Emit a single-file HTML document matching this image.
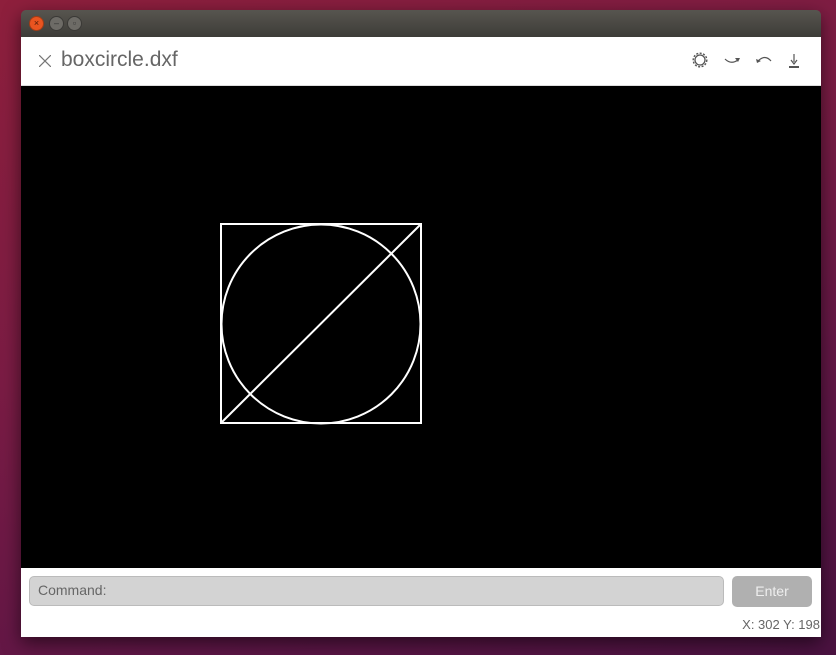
<!DOCTYPE html>
<html><head><style>
html,body{margin:0;padding:0}
body{width:836px;height:655px;overflow:hidden;position:relative;font-family:"Liberation Sans",sans-serif;
background:linear-gradient(160deg,#8e1f3c 0%,#7a1c44 40%,#5e1646 75%,#4a1240 100%);}
.win{position:absolute;left:21px;top:10px;width:800px;height:627px;box-shadow:0 6px 18px rgba(0,0,0,.55);border-radius:5px 5px 0 0;overflow:hidden}
.title{position:absolute;left:0;top:0;width:800px;height:27px;background:linear-gradient(#57554f,#3d3c38)}
.btn{position:absolute;top:6px;width:13px;height:13px;border-radius:50%;background:#6d6b66;border:1px solid #3a3936;font-size:9px;line-height:13px;text-align:center;color:#333}
.hdr{position:absolute;left:0;top:27px;width:800px;height:48px;background:#fff;border-bottom:1px solid #ddd}
.canvas{position:absolute;left:0;top:76px;width:800px;height:482px;background:#000}
.foot{position:absolute;left:0;top:558px;width:800px;height:69px;background:#fff}
.cmd{position:absolute;left:8px;top:8px;width:695px;height:30px;background:#d3d3d3;border:1px solid #bbb;border-radius:5px;box-sizing:border-box;color:#666;font-size:14px;line-height:27px;padding-left:8px}
.ent{position:absolute;left:711px;top:8px;width:80px;height:31px;background:#b0b0b0;border-radius:5px;color:#eee;font-size:14px;line-height:30px;text-align:center}
.xy{position:absolute;right:1px;top:49px;font-size:13px;color:#666}
</style></head><body>
<div class="win">
 <div class="title">
  <div class="btn" style="left:8px;background:#e95420;border-color:#a33c15;color:#4a1a08">×</div>
  <div class="btn" style="left:28px">–</div>
  <div class="btn" style="left:46px">▫</div>
 </div>
 <div class="hdr">
  <svg style="position:absolute;left:18px;top:18px" width="12" height="12"><path d="M0 0L12 12M12 0L0 12" stroke="#777" stroke-width="1.2"/></svg>
  <div style="position:absolute;left:40px;top:11px;font-size:21px;color:#666">boxcircle.dxf</div>
  <svg style="position:absolute;left:670px;top:14px" width="120" height="22">
   <circle cx="9" cy="9" r="5" fill="none" stroke="#555" stroke-width="1.3"/>
   <circle cx="9" cy="9" r="6.8" fill="none" stroke="#555" stroke-width="1.4" stroke-dasharray="2 1.5"/>
   <path d="M34 8Q40 14 47 9" fill="none" stroke="#555" stroke-width="1.2"/><path d="M44 7L49 7L47 11Z" fill="#555"/>
   <path d="M80 10Q74 3 67 10" fill="none" stroke="#555" stroke-width="1.2"/><path d="M65 8L70 10L66 12Z" fill="#555"/>
   <path d="M103 3V11M100 9L103 13L106 9" fill="none" stroke="#555" stroke-width="1.2"/><path d="M98 16H108" stroke="#555" stroke-width="2"/>
  </svg>
 </div>
 <div class="canvas">
  <svg width="800" height="482" style="position:absolute;left:0;top:0">
   <g stroke="#fff" stroke-width="2" fill="none">
    <rect x="200" y="138" width="200" height="199"/>
    <circle cx="300" cy="238" r="99.5"/>
    <path d="M200 337L400 138"/>
   </g>
  </svg>
 </div>
 <div class="foot">
  <div class="cmd">Command:</div>
  <div class="ent">Enter</div>
  <div class="xy">X: 302 Y: 198</div>
 </div>
</div>
</body></html>
